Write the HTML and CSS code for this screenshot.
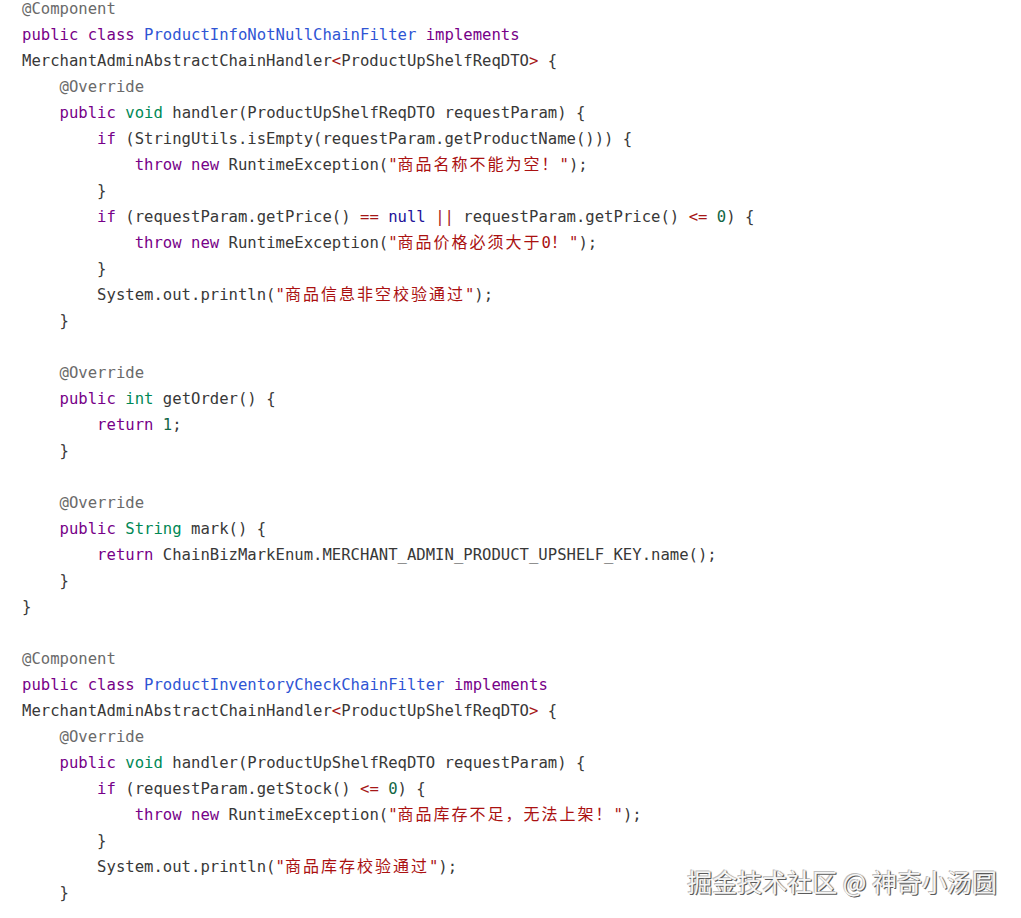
FILE: index.html
```html
<!DOCTYPE html>
<html lang="zh-CN">
<head>
<meta charset="utf-8">
<title>Code</title>
<link rel="stylesheet" href="styles.css">
</head>
<body>
<pre class="code"><span class="m">@Component</span>
<span class="k">public</span> <span class="k">class</span> <span class="d">ProductInfoNotNullChainFilter</span> <span class="k">implements</span>
MerchantAdminAbstractChainHandler<span class="o">&lt;</span>ProductUpShelfReqDTO<span class="o">&gt;</span> {
    <span class="m">@Override</span>
    <span class="k">public</span> <span class="t">void</span> handler(ProductUpShelfReqDTO requestParam) {
        <span class="k">if</span> (StringUtils.isEmpty(requestParam.getProductName())) {
            <span class="k">throw</span> <span class="k">new</span> RuntimeException(<span class="s">"<span class="zh">商品名称不能为空！</span>"</span>);
        }
        <span class="k">if</span> (requestParam.getPrice() <span class="o">==</span> <span class="a">null</span> <span class="o">||</span> requestParam.getPrice() <span class="o">&lt;=</span> <span class="n">0</span>) {
            <span class="k">throw</span> <span class="k">new</span> RuntimeException(<span class="s">"<span class="zh">商品价格必须大于</span>0<span class="zh">！</span>"</span>);
        }
        System.out.println(<span class="s">"<span class="zh">商品信息非空校验通过</span>"</span>);
    }

    <span class="m">@Override</span>
    <span class="k">public</span> <span class="t">int</span> getOrder() {
        <span class="k">return</span> <span class="n">1</span>;
    }

    <span class="m">@Override</span>
    <span class="k">public</span> <span class="t">String</span> mark() {
        <span class="k">return</span> ChainBizMarkEnum.MERCHANT_ADMIN_PRODUCT_UPSHELF_KEY.name();
    }
}

<span class="m">@Component</span>
<span class="k">public</span> <span class="k">class</span> <span class="d">ProductInventoryCheckChainFilter</span> <span class="k">implements</span>
MerchantAdminAbstractChainHandler<span class="o">&lt;</span>ProductUpShelfReqDTO<span class="o">&gt;</span> {
    <span class="m">@Override</span>
    <span class="k">public</span> <span class="t">void</span> handler(ProductUpShelfReqDTO requestParam) {
        <span class="k">if</span> (requestParam.getStock() <span class="o">&lt;=</span> <span class="n">0</span>) {
            <span class="k">throw</span> <span class="k">new</span> RuntimeException(<span class="s">"<span class="zh">商品库存不足，无法上架！</span>"</span>);
        }
        System.out.println(<span class="s">"<span class="zh">商品库存校验通过</span>"</span>);
    }</pre>
<div class="watermark">掘金技术社区 @ 神奇小汤圆</div>
</body>
</html>
```

FILE: styles.css
```css
html, body {
  margin: 0;
  padding: 0;
  background: #ffffff;
  height: 918px;
  overflow: hidden;
}
body {
  position: relative;
}
.code {
  margin: -4px 0 0 0;
  padding: 0 0 0 22px;
  font-family: "DejaVu Sans Mono", "Liberation Mono", "Noto Sans CJK SC", monospace;
  font-size: 15.6px;
  line-height: 26px;
  color: #383838;
  white-space: pre;
}
.k { color: #770088; }
.t { color: #008855; }
.d { color: #2f55d4; }
.a { color: #221199; }
.m { color: #6a6a6a; }
.s { color: #aa1111; }
.o { color: #a61717; }
.n { color: #116644; }
.zh {
  font-family: "Noto Sans CJK SC", sans-serif;
  font-size: 16px;
  line-height: 1;
  letter-spacing: 2px;
}
.watermark {
  position: absolute;
  right: 24px;
  top: 864px;
  font-family: "Noto Sans CJK SC", sans-serif;
  font-size: 25px;
  line-height: 34px;
  color: #f6f6f6;
  text-shadow: 1px 1px 0 #5a5a5a, -1px -1px 0 #bdbdbd, 1px 0 1px #888888;
}
```
